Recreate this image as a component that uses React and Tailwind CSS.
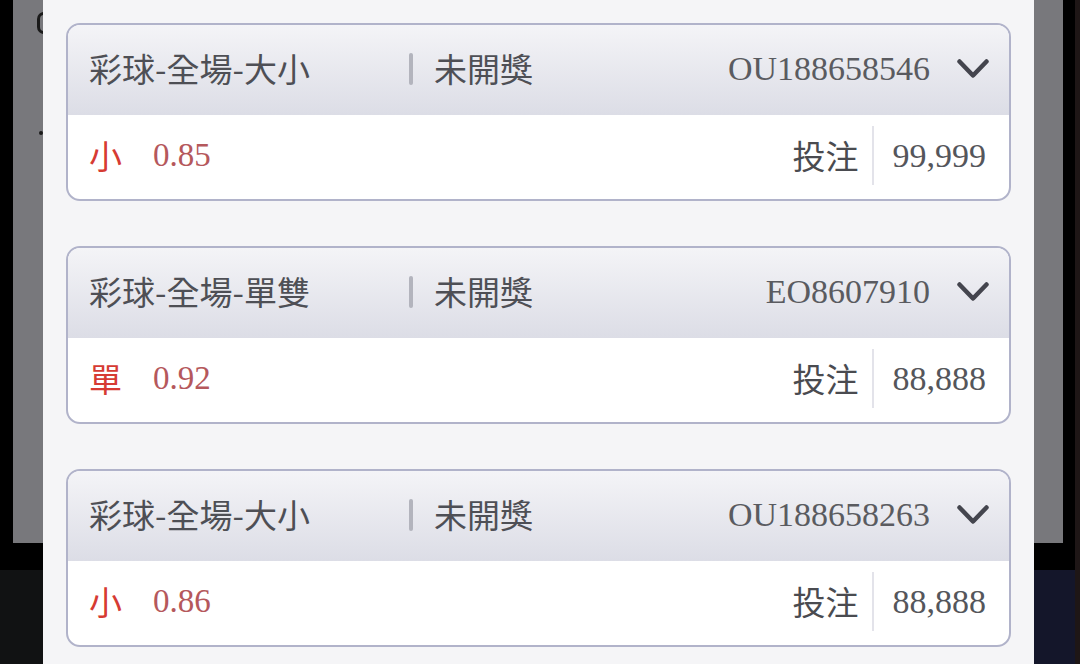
import React from "react";

const cjk = { fontFamily: '"Noto Sans CJK TC", "Noto Sans CJK SC", sans-serif' };
const serif = { fontFamily: '"Liberation Serif", "Times New Roman", serif' };

function Chevron() {
  return (
    <svg width="32" height="20" viewBox="0 0 32 20" fill="none">
      <path d="M2.5 2.5 L16 16.5 L29.5 2.5" stroke="#44454e" strokeWidth="4.5" strokeLinecap="round" strokeLinejoin="round" />
    </svg>
  );
}

function Card({ title, id, pick, odds, amount }) {
  return (
    <div className="h-[178px] rounded-[14px] border-2 border-[#b1b3ca] bg-white overflow-hidden flex flex-col">
      <div className="h-[90px] flex items-center pl-[21px] pr-[20px] pb-[3px] bg-gradient-to-b from-[#f4f4f7] to-[#dcdde6]">
        <div className="w-[320px] text-[33px] text-[#4e4f55] leading-none" style={cjk}>{title}</div>
        <div className="w-[4px] h-[32px] bg-[#b3b4bd] rounded-sm"></div>
        <div className="ml-[21px] text-[33px] text-[#4e4f55] leading-none" style={cjk}>未開獎</div>
        <div className="flex-1"></div>
        <div className="text-[34px] text-[#5a5b60] leading-none" style={serif}>{id}</div>
        <div className="ml-[27px] flex items-center"><Chevron /></div>
      </div>
      <div className="flex-1 flex items-center pl-[21px] pr-[23px] pb-[3px]">
        <div className="text-[33px] text-[#d63b33] leading-none" style={cjk}>{pick}</div>
        <div className="ml-[31px] text-[33px] text-[#b5585c] leading-none" style={serif}>{odds}</div>
        <div className="flex-1"></div>
        <div className="text-[33px] text-[#4a4b50] leading-none" style={cjk}>投注</div>
        <div className="ml-[13px] w-[2px] h-[59px] bg-[#e3e3ea]"></div>
        <div className="ml-[19px] text-[34px] text-[#55565b] leading-none" style={serif}>{amount}</div>
      </div>
    </div>
  );
}

export default function App() {
  const cards = [
    { title: "彩球-全場-大小", id: "OU188658546", pick: "小", odds: "0.85", amount: "99,999" },
    { title: "彩球-全場-單雙", id: "EO8607910", pick: "單", odds: "0.92", amount: "88,888" },
    { title: "彩球-全場-大小", id: "OU188658263", pick: "小", odds: "0.86", amount: "88,888" },
  ];
  return (
    <div className="w-[1080px] h-[664px] flex overflow-hidden bg-black">
      <div className="w-[43px] h-full flex flex-col">
        <div className="h-[543px] flex">
          <div className="w-[13px] bg-black"></div>
          <div className="w-[30px] bg-[#78787c] relative overflow-hidden">
            <span className="absolute left-[24px] top-[12px] w-[14px] h-[22px] rounded-full border-[3px] border-[#1a1a1a]"></span>
            <span className="absolute left-[26px] top-[131px] w-[4px] h-[4px] rounded-full bg-[#1a1a1a]"></span>
          </div>
        </div>
        <div className="h-[27px] bg-black"></div>
        <div className="flex-1 bg-[#111213]"></div>
      </div>
      <div className="w-[991px] h-full bg-[#f5f5f7] pt-[23px] px-[23px] flex flex-col gap-[45px]">
        {cards.map((c, i) => (
          <Card key={i} {...c} />
        ))}
      </div>
      <div className="w-[46px] h-full flex flex-col">
        <div className="h-[543px] flex">
          <div className="w-[29px] bg-[#78787c]"></div>
          <div className="w-[12px] bg-black"></div>
          <div className="w-[5px] bg-[#1e1616]"></div>
        </div>
        <div className="h-[27px] flex">
          <div className="w-[41px] bg-black"></div>
          <div className="w-[5px] bg-[#1e1616]"></div>
        </div>
        <div className="flex-1 flex">
          <div className="w-[41px] bg-[#14162a]"></div>
          <div className="w-[5px] bg-[#1e1616]"></div>
        </div>
      </div>
    </div>
  );
}
